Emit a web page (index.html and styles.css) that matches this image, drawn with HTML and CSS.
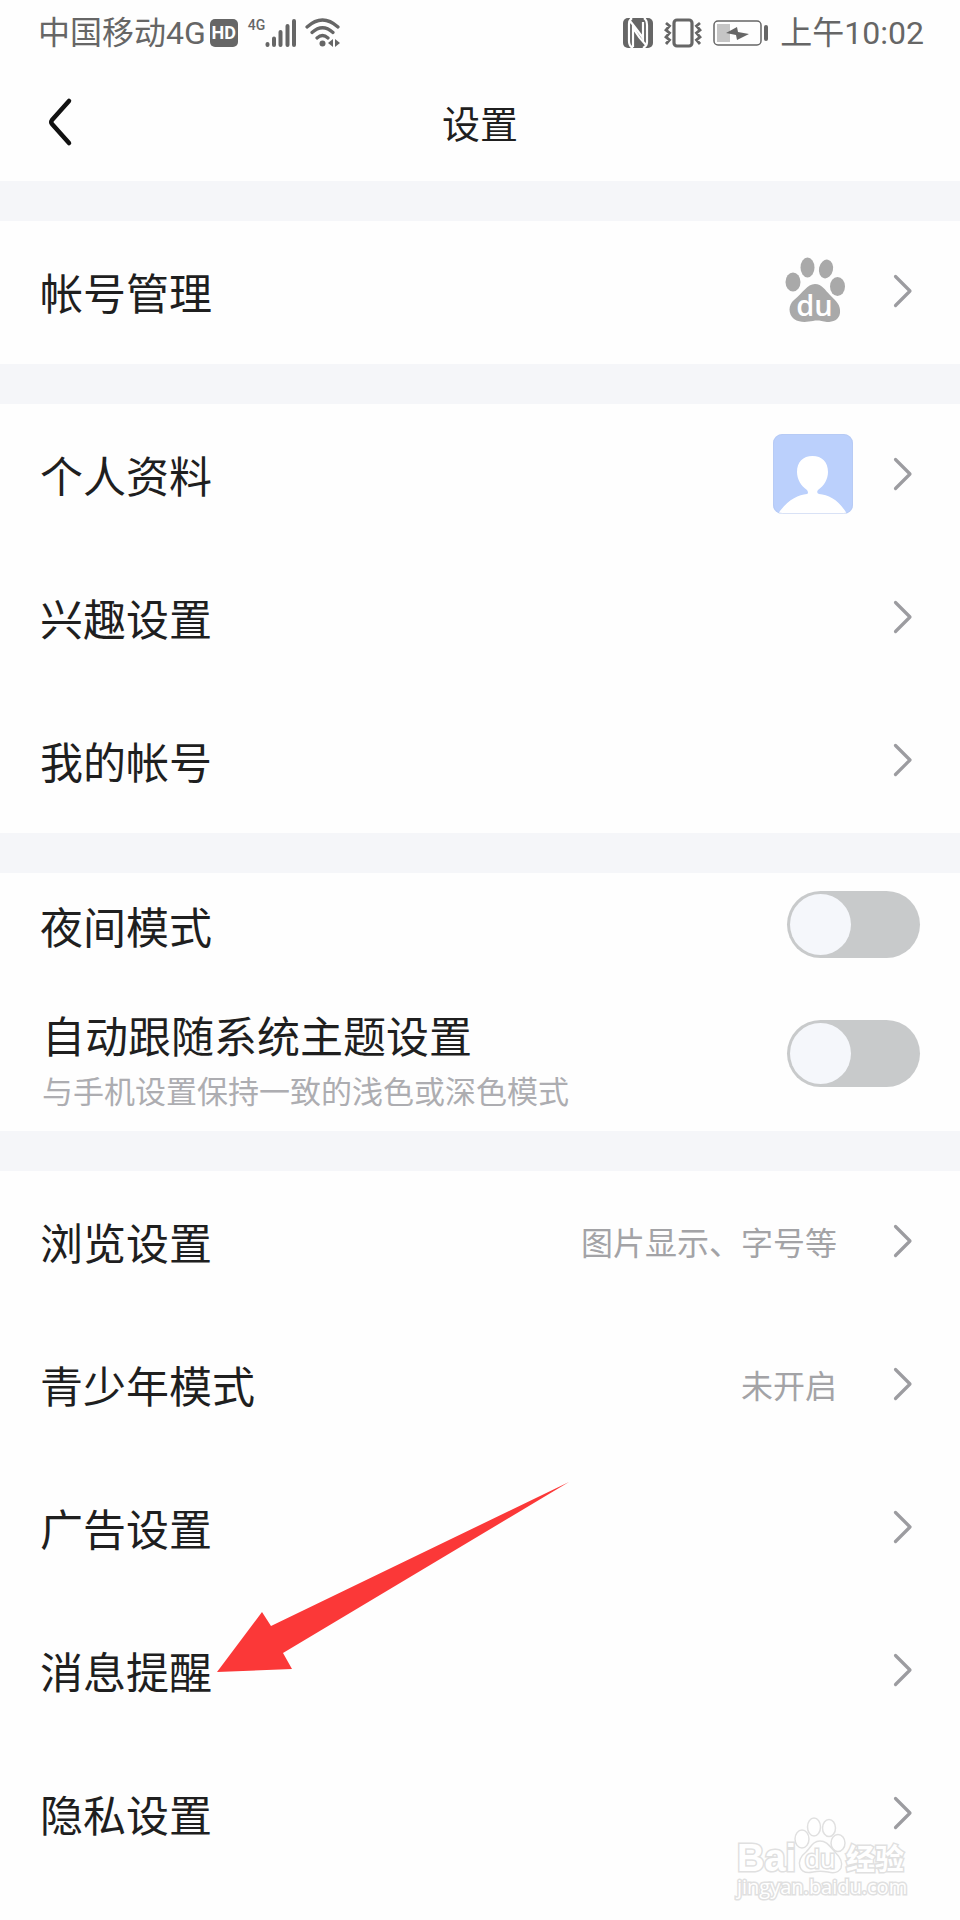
FILE: index.html
```
<!DOCTYPE html>
<html lang="zh-CN">
<head>
<meta charset="utf-8">
<meta name="viewport" content="width=device-width, initial-scale=1">
<title>设置</title>
<link rel="stylesheet" href="styles.css">
</head>
<body>
<svg class="defs" width="0" height="0" aria-hidden="true">
  <symbol id="chevron" viewBox="0 0 20 36"><path d="M2.500 3.500L17 18L2.500 32.500" fill="none" stroke="currentColor" stroke-width="3.200" stroke-linecap="round" stroke-linejoin="round"/></symbol>
</svg>
<div class="page">
  <div class="status">
    <div class="status-side">
      <span>中国移动4G</span>
      <span class="hd">HD</span>
      <span class="signal">
        <span class="net">4G</span>
        <svg width="32" height="30" viewBox="0 0 32 30" stroke="currentColor" stroke-width="4" stroke-linecap="round"><path d="M2.500 26v1M9 20.500v6.500M15.500 14v13M22.500 8v19M29 3v24"/></svg>
      </span>
      <svg class="wifi" width="36" height="30" viewBox="0 0 36 30" fill="none" stroke="currentColor" stroke-width="3.200" stroke-linecap="round"><path d="M2 9Q17.500 -5 33 9M7 14.500Q17.500 5 28 14.500M12 20Q17.500 15 23 20"/><circle cx="17.500" cy="25.500" r="3" fill="currentColor" stroke="none"/><path d="M28 21v8l-5-4zM30 21v8l5-4z" fill="currentColor" stroke="none"/></svg>
    </div>
    <div class="status-side status-right">
      <svg width="30" height="30" viewBox="0 0 30 30"><rect width="30" height="30" rx="5" fill="currentColor"/><path d="M9 0Q6 2 6 6V23Q6 28 10 30M7 3Q12 9 20 20V4M21 0Q24 2 24 7V24Q24 28 20 30M10 29V10Q16 20 23 27" fill="none" stroke="#fff" stroke-width="2.200"/></svg>
      <svg width="38" height="30" viewBox="0 0 38 30" fill="none" stroke="currentColor"><rect x="10" y="2" width="18" height="26" rx="3" stroke-width="3.200"/><path d="M2 5l3.500 3-3.500 4 3.500 3-3.500 4 3.500 3-3.500 4M36 5l-3.500 3 3.500 4-3.500 3 3.500 4-3.500 3 3.500 4" stroke-width="2.800"/></svg>
      <svg width="56" height="26" viewBox="0 0 56 26"><rect x="1" y="1" width="47" height="24" rx="4" fill="none" stroke="currentColor" stroke-width="1.500"/><rect x="4" y="4" width="13" height="18" fill="#c5c5c5"/><path d="M13 13l11-6 1 5 11 2-12 6-1-5z" fill="currentColor"/><rect x="51" y="5" width="4" height="16" rx="2" fill="currentColor"/></svg>
      <span>上午10:02</span>
    </div>
  </div>

  <header class="header">
    <button class="back" type="button" aria-label="返回"><svg width="26" height="50" viewBox="0 0 26 50"><path d="M22 4L5 23Q3.500 25 5 27L22 46" fill="none" stroke="currentColor" stroke-width="4.500" stroke-linecap="round" stroke-linejoin="round"/></svg></button>
    <h1 class="title">设置</h1>
  </header>

  <main class="groups">
    <section class="group">
      <a class="row" href="#account"><span class="label">帐号管理</span>
        <svg class="thumb" viewBox="0 0 80 80" role="img" aria-label="百度"><g fill="#a9a9a9"><ellipse cx="20" cy="31" rx="7.500" ry="9.500"/><ellipse cx="34.500" cy="16.500" rx="7" ry="10"/><ellipse cx="53" cy="18" rx="7" ry="9.500" transform="rotate(12 53 18)"/><ellipse cx="64.500" cy="35.500" rx="7.500" ry="9.500"/><path d="M42 33C49 33 52 39 57 44C63 50 68 54 67 62C66 69 60 71 54 71C48 70 45 69 40 70C34 71 27 72 21 68C15 63 15 54 21 49C30 42 34 33 42 33Z"/></g><text class="du" x="41.500" y="65" text-anchor="middle">du</text></svg>
        <svg class="chevron"><use href="#chevron"/></svg></a>
    </section>

    <section class="group">
      <a class="row" href="#profile"><span class="label">个人资料</span>
        <svg class="thumb" viewBox="0 0 80 80" role="img" aria-label="头像"><defs><clipPath id="frame"><rect width="80" height="80" rx="9"/></clipPath></defs><g clip-path="url(#frame)"><rect width="80" height="80" fill="#bbd0fc"/><path d="M5 80C14 66 25 61 34 60Q36 59 34 56C28 52 24 45 24 38C24 28 30 22 39.500 22C49 22 55 28 55 38C55 45 51 52 45 56Q43 59 46 60C56 61 66 66 74 80Z" fill="#fff"/></g><rect x="0.500" y="0.500" width="79" height="79" rx="9" fill="none" stroke="#b4c6ee" stroke-opacity="0.500"/></svg>
        <svg class="chevron"><use href="#chevron"/></svg></a>
      <a class="row" href="#interest"><span class="label">兴趣设置</span><svg class="chevron"><use href="#chevron"/></svg></a>
      <a class="row" href="#mine"><span class="label">我的帐号</span><svg class="chevron"><use href="#chevron"/></svg></a>
    </section>

    <section class="group">
      <div class="row row-switch">
        <label class="label" for="night">夜间模式</label>
        <input class="switch" id="night" type="checkbox" role="switch">
      </div>
      <div class="row row-detail">
        <div class="detail">
          <label class="label" for="follow">自动跟随系统主题设置</label>
          <p class="note">与手机设置保持一致的浅色或深色模式</p>
        </div>
        <input class="switch" id="follow" type="checkbox" role="switch">
      </div>
    </section>

    <section class="group group-last">
      <a class="row" href="#browse"><span class="label">浏览设置</span><span class="value">图片显示、字号等</span><svg class="chevron"><use href="#chevron"/></svg></a>
      <a class="row" href="#teen"><span class="label">青少年模式</span><span class="value">未开启</span><svg class="chevron"><use href="#chevron"/></svg></a>
      <a class="row" href="#ads"><span class="label">广告设置</span><svg class="chevron"><use href="#chevron"/></svg></a>
      <a class="row" href="#message"><span class="label">消息提醒</span><svg class="chevron"><use href="#chevron"/></svg>
        <svg class="arrow" viewBox="0 0 352 190" aria-hidden="true"><path d="M0 190L45 130L54 144L352 0L66 171L75 187Z" fill="#fb3838"/></svg></a>
      <a class="row" href="#privacy"><span class="label">隐私设置</span><svg class="chevron"><use href="#chevron"/></svg></a>
    </section>
  </main>

  <div class="watermark">
    <svg width="176" height="88" viewBox="0 0 176 88" role="img" aria-label="Baidu经验 jingyan.baidu.com">
      <g class="mark">
        <text class="mark-bai" x="3" y="56">Bai</text>
        <ellipse cx="68" cy="24" rx="7" ry="9"/><ellipse cx="80" cy="12" rx="6.500" ry="9"/><ellipse cx="95" cy="13" rx="6.500" ry="8.500"/><ellipse cx="104" cy="28" rx="7" ry="8.500"/>
        <path d="M86 26C93 26 96 32 101 37C107 43 109 48 107 53C104 59 98 58 94 57C88 56 84 56 79 57C74 58 68 58 66 52C64 46 67 41 72 37C77 32 79 26 86 26Z"/>
        <text class="mark-du" x="86" y="53" text-anchor="middle">du</text>
        <text class="mark-cn" x="112" y="55">经验</text>
        <text class="mark-url" x="3" y="79">jingyan.baidu.com</text>
      </g>
    </svg>
  </div>
</div>
</body>
</html>
```
FILE: styles.css
```
* { box-sizing: border-box; }

body {
  margin: 0;
  background: #fefefe;
  color: #1f1f1f;
  font-family: "Noto Sans CJK SC", sans-serif;
}

.defs { position: absolute; }

.page {
  position: relative;
  min-height: 100vh;
  overflow: hidden;
}

.status {
  display: flex;
  align-items: center;
  justify-content: space-between;
  height: 66px;
  padding: 0 36px 0 38px;
  color: #666;
  font-family: Roboto, "Noto Sans CJK SC", sans-serif;
  font-size: 32px;
  line-height: 40px;
}

.status-side {
  display: flex;
  align-items: center;
}

.status-right { gap: 11px; }

.hd {
  width: 28px;
  margin: 0 10px 0 4px;
  border-radius: 5px;
  background: #666;
  color: #fff;
  font-size: 18px;
  font-weight: 700;
  line-height: 28px;
  text-align: center;
}

.signal {
  display: flex;
  align-items: flex-start;
}

.net {
  font-size: 14px;
  font-weight: 500;
  line-height: 14px;
}

.wifi { margin-left: 8px; }

.header {
  display: grid;
  grid-template-columns: 1fr auto 1fr;
  align-items: center;
  height: 115px;
  padding: 0 47px 4px;
}

.back {
  display: flex;
  justify-self: start;
  padding: 0;
  border: 0;
  background: none;
  color: #111;
}

.title {
  margin: 0;
  font-size: 38px;
  font-weight: 400;
  line-height: 56px;
}

.groups {
  display: flex;
  flex-direction: column;
  gap: 40px;
  padding-top: 40px;
  background: #f5f6f9;
}

.group { background: #fefefe; }

.group-last { padding-bottom: 34px; }

.row {
  position: relative;
  display: flex;
  align-items: center;
  min-height: 143px;
  padding: 0 47px 3px 40px;
  color: inherit;
  text-decoration: none;
}

.row-switch {
  min-height: 103px;
  padding: 0 40px 0 40px;
}

.row-detail {
  min-height: 155px;
  padding: 0 40px 0 40px;
}

.label {
  flex: 1;
  font-size: 43px;
  line-height: 56px;
}

.detail {
  display: flex;
  flex: 1;
  flex-direction: column;
  gap: 8px;
  padding: 8px 0 0 2px;
}

.note {
  margin: 0;
  color: #adadb1;
  font-size: 31px;
  line-height: 40px;
}

.value {
  margin-right: 16px;
  color: #a3a3a6;
  font-size: 32px;
  line-height: 40px;
}

.thumb {
  width: 80px;
  height: 80px;
}

.chevron {
  width: 20px;
  height: 36px;
  margin-left: 40px;
  color: #9c9ca0;
}

.du {
  fill: #fff;
  font-family: "Open Sans", sans-serif;
  font-size: 29px;
  font-weight: 600;
}

.switch {
  appearance: none;
  width: 133px;
  height: 67px;
  margin: 0;
  padding: 3px;
  border-radius: 34px;
  background: #c8cacb;
}

.switch::before {
  content: "";
  display: block;
  width: 61px;
  height: 61px;
  border-radius: 50%;
  background: #f5f7fb;
}

.switch:checked::before { margin-left: auto; }

.arrow {
  position: absolute;
  left: 217px;
  bottom: 71px;
  width: 352px;
  height: 190px;
  pointer-events: none;
}

.watermark {
  position: absolute;
  right: 50px;
  bottom: 12px;
  pointer-events: none;
}

.mark {
  fill: #fff;
  stroke: #e0e0e0;
  stroke-width: 1.5px;
}

.mark text { paint-order: stroke; stroke-width: 3px; }

.mark-bai {
  font-family: "Liberation Sans", sans-serif;
  font-size: 38px;
  font-weight: 700;
}

.mark-du {
  font-family: "Open Sans", sans-serif;
  font-size: 25px;
}

.mark-cn {
  font-size: 29px;
  font-weight: 700;
}

.mark-url {
  font-family: "Open Sans", sans-serif;
  font-size: 20px;
}
```
